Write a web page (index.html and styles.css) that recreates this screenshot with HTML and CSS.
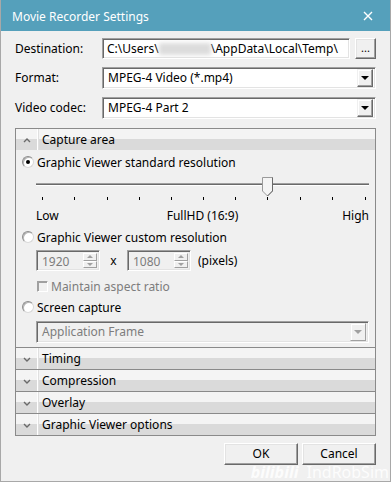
FILE: index.html
```html
<!DOCTYPE html>
<html lang="en">
<head>
    <meta charset="UTF-8">
    <title>Movie Recorder Settings</title>
    <link rel="stylesheet" href="styles.css">
</head>
<body>
<div class="window">
    <div class="titlebar">
        <span class="title">Movie Recorder Settings</span>
        <svg class="close" width="10" height="10" viewBox="0 0 10 10"><path d="M1 1L9 9M9 1L1 9" stroke="#fff" stroke-width="1.4"/></svg>
    </div>

    <div class="content">
        <div class="form">
            <label>Destination:</label>
            <div class="dest">
                <div class="textbox">C:\Users\<span class="blur"></span>\AppData\Local\Temp\</div>
                <div class="btn browse">...</div>
            </div>

            <label>Format:</label>
            <div class="combo">
                <span class="combo-text">MPEG-4 Video (*.mp4)</span>
                <span class="drop"><span class="tri"></span></span>
            </div>

            <label>Video codec:</label>
            <div class="combo">
                <span class="combo-text">MPEG-4 Part 2</span>
                <span class="drop"><span class="tri"></span></span>
            </div>
        </div>

        <div class="panel">
            <div class="section open">
                <div class="sec-head">
                    <span class="chev"><svg width="8" height="6" viewBox="0 0 8 6"><polyline points="1,5 4,2 7,5" fill="none" stroke="#6a6a6a" stroke-width="1.4"/></svg></span>
                    <span class="sec-title">Capture area</span>
                </div>
                <div class="sec-body">
                    <div class="opt"><span class="radio checked"></span>Graphic Viewer standard resolution</div>

                    <div class="slider">
                        <svg width="333" height="30" viewBox="0 0 333 30">
                            <rect x="0" y="11" width="333" height="1" fill="#a0a0a0"/>
                            <rect x="0" y="12" width="333" height="1" fill="#6a6a6a"/>
                            <rect x="0" y="13" width="333" height="1" fill="#fff"/>
                            <g fill="#000">
                                <rect x="6" y="25" width="1" height="3"/>
                                <rect x="38" y="25" width="1" height="3"/>
                                <rect x="71" y="25" width="1" height="3"/>
                                <rect x="103" y="25" width="1" height="3"/>
                                <rect x="135" y="25" width="1" height="3"/>
                                <rect x="167" y="25" width="1" height="3"/>
                                <rect x="199" y="25" width="1" height="3"/>
                                <rect x="231" y="25" width="1" height="3"/>
                                <rect x="264" y="25" width="1" height="3"/>
                                <rect x="296" y="25" width="1" height="3"/>
                                <rect x="329" y="25" width="1" height="3"/>
                            </g>
                            <path d="M226.5 5.5 H236.5 V19 L231.5 24 L226.5 19 Z" fill="#f4f4f4" stroke="#9a9a9a"/>
                            <path d="M236.5 5.5 V19 L231.5 24" fill="none" stroke="#6a6a6a"/>
                        </svg>
                    </div>
                    <div class="scale">
                        <span class="lo">Low</span>
                        <span class="mid">FullHD (16:9)</span>
                        <span class="hi">High</span>
                    </div>

                    <div class="opt gap2"><span class="radio"></span>Graphic Viewer custom resolution</div>

                    <div class="spins">
                        <div class="spin">
                            <span class="spin-val">1920</span>
                            <span class="spin-btns"><span class="sb"><span class="up"></span></span><span class="sb"><span class="dn"></span></span></span>
                        </div>
                        <span class="times">x</span>
                        <div class="spin">
                            <span class="spin-val">1080</span>
                            <span class="spin-btns"><span class="sb"><span class="up"></span></span><span class="sb"><span class="dn"></span></span></span>
                        </div>
                        <span class="unit">(pixels)</span>
                    </div>

                    <div class="check-row"><span class="check"></span>Maintain aspect ratio</div>

                    <div class="opt gap1"><span class="radio"></span>Screen capture</div>

                    <div class="combo disabled">
                        <span class="combo-text">Application Frame</span>
                        <span class="drop"><span class="tri"></span></span>
                    </div>
                </div>
            </div>

            <div class="section">
                <div class="sec-head">
                    <span class="chev"><svg width="8" height="6" viewBox="0 0 8 6"><polyline points="1,2 4,5 7,2" fill="none" stroke="#6a6a6a" stroke-width="1.4"/></svg></span>
                    <span class="sec-title">Timing</span>
                </div>
            </div>
            <div class="section">
                <div class="sec-head">
                    <span class="chev"><svg width="8" height="6" viewBox="0 0 8 6"><polyline points="1,2 4,5 7,2" fill="none" stroke="#6a6a6a" stroke-width="1.4"/></svg></span>
                    <span class="sec-title">Compression</span>
                </div>
            </div>
            <div class="section">
                <div class="sec-head">
                    <span class="chev"><svg width="8" height="6" viewBox="0 0 8 6"><polyline points="1,2 4,5 7,2" fill="none" stroke="#6a6a6a" stroke-width="1.4"/></svg></span>
                    <span class="sec-title">Overlay</span>
                </div>
            </div>
            <div class="section">
                <div class="sec-head">
                    <span class="chev"><svg width="8" height="6" viewBox="0 0 8 6"><polyline points="1,2 4,5 7,2" fill="none" stroke="#6a6a6a" stroke-width="1.4"/></svg></span>
                    <span class="sec-title">Graphic Viewer options</span>
                </div>
            </div>
        </div>

        <div class="actions">
            <div class="btn push">OK</div>
            <div class="btn push">Cancel</div>
        </div>
    </div>

    <!-- watermark -->
    <div class="watermark"><span class="bili">bilibili</span>IndRobSim</div>
</div>
</body>
</html>
```

FILE: styles.css
```css
body {
    margin: 0;
    font-family: "Noto Sans", "Open Sans", sans-serif;
    font-size: 12px;
    color: #000;
    background: #fff;
}

.window {
    position: relative;
    width: 389px;
    height: 481px;
    border: 1px solid #a8a8a8;
    border-top: none;
    background: #f0f0f0;
    overflow: hidden;
}

.titlebar {
    height: 31px;
    background: #55a0bb;
    display: flex;
    align-items: center;
    justify-content: space-between;
    padding: 0 17px 0 11px;
    color: #fff;
}

.title {
    font-size: 12px;
    margin-top: 1px;
}

.content {
    padding: 7px 14px 0 14px;
}

/* top form rows */
.form {
    display: grid;
    grid-template-columns: 87px minmax(0, 1fr);
    row-gap: 8px;
    align-items: center;
}

.form label {
    line-height: 16px;
}

.dest {
    display: flex;
    gap: 5px;
    min-width: 0;
}

.textbox,
.combo,
.spin {
    box-sizing: border-box;
    border: 1px solid;
    border-color: #a0a0a0 #fff #fff #a0a0a0;
    box-shadow: inset 1px 1px #696969, inset -1px -1px #e3e3e3;
    background: #fff;
}

.textbox {
    flex: 1;
    min-width: 0;
    height: 21px;
    line-height: 19px;
    padding-left: 4px;
    white-space: nowrap;
    overflow: hidden;
}

.blur {
    display: inline-block;
    width: 52px;
    height: 12px;
    vertical-align: -2px;
    background: #dcdcdc;
    filter: blur(2px);
}

.btn {
    box-sizing: border-box;
    background: #f0f0f0;
    border: 1px solid;
    border-color: #fff #696969 #696969 #fff;
    box-shadow: inset -1px -1px #a0a0a0, inset 1px 1px #e3e3e3;
    text-align: center;
}

.browse {
    flex: none;
    width: 21px;
    height: 21px;
    line-height: 17px;
    font-size: 11px;
}

.combo {
    height: 22px;
    display: flex;
    align-items: center;
    justify-content: space-between;
    padding: 2px;
}

.combo-text {
    padding-left: 3px;
    line-height: 16px;
}

.drop {
    box-sizing: border-box;
    width: 16px;
    height: 18px;
    background: #f0f0f0;
    border: 1px solid;
    border-color: #f0f0f0 #696969 #696969 #f0f0f0;
    box-shadow: inset -1px -1px #a0a0a0, inset 1px 1px #fff;
    display: flex;
    align-items: center;
    justify-content: center;
}

.tri {
    width: 0;
    height: 0;
    border-left: 4px solid transparent;
    border-right: 4px solid transparent;
    border-top: 4px solid #000;
}

.combo.disabled {
    background: #f0f0f0;
    color: #7d7d7d;
}

.combo.disabled .drop {
    border-color: #f0f0f0 #a0a0a0 #a0a0a0 #f0f0f0;
    box-shadow: inset 1px 1px #fff;
}

.combo.disabled .tri {
    border-top-color: #a0a0a0;
}

/* collapsible panel */
.panel {
    margin-top: 9px;
    border: 1px solid #8a8a8a;
}

.section + .section {
    border-top: 1px solid #8a8a8a;
}

.sec-head {
    height: 21px;
    display: flex;
    align-items: center;
    background: linear-gradient(#f4f4f4 0, #f4f4f4 48%, #dadada 48%, #dadada 100%);
}

.chev {
    width: 22px;
    height: 21px;
    display: flex;
    align-items: center;
    justify-content: center;
    box-sizing: border-box;
    border-right: 1px solid #fff;
    box-shadow: 1px 0 #e0e0e0;
}

.sec-title {
    padding-left: 4px;
}

.sec-body {
    padding: 2px 6px 4px 6px;
    height: 191px;
}

.opt {
    height: 20px;
    display: flex;
    align-items: center;
}

.gap2 {
    margin-top: 2px;
}

.gap1 {
    margin-top: 1px;
}

.radio {
    box-sizing: border-box;
    width: 12px;
    height: 12px;
    border-radius: 50%;
    background: #fff;
    border: 1px solid;
    border-color: #8c8c8c #d8d8d8 #d8d8d8 #8c8c8c;
    box-shadow: inset 1px 1px #b5b5b5;
    margin-right: 3px;
    position: relative;
}

.radio.checked::after {
    content: "";
    position: absolute;
    left: 3px;
    top: 3px;
    width: 4px;
    height: 4px;
    border-radius: 50%;
    background: #000;
}

.slider {
    margin-left: 14px;
    height: 30px;
}

.slider svg {
    display: block;
}

.scale {
    margin: 3px 0 0 14px;
    width: 333px;
    height: 20px;
    display: grid;
    grid-template-columns: 1fr auto 1fr;
    align-items: center;
}

.scale .hi {
    justify-self: end;
}

.spins {
    margin: 3px 0 0 14px;
    display: flex;
    align-items: center;
}

.spin {
    width: 64px;
    height: 21px;
    display: flex;
    justify-content: space-between;
    padding: 2px;
    background: #f0f0f0;
    color: #7d7d7d;
}

.spin-val {
    padding-left: 3px;
    line-height: 17px;
}

.spin-btns {
    width: 14px;
    display: flex;
    flex-direction: column;
}

.sb {
    flex: 1;
    box-sizing: border-box;
    border: 1px solid;
    border-color: #fff #a0a0a0 #a0a0a0 #fff;
    display: flex;
    align-items: center;
    justify-content: center;
}

.up,
.dn {
    width: 0;
    height: 0;
    border-left: 3px solid transparent;
    border-right: 3px solid transparent;
}

.up {
    border-bottom: 3px solid #a0a0a0;
}

.dn {
    border-top: 3px solid #a0a0a0;
}

.times {
    width: 27px;
    text-align: center;
}

.unit {
    margin-left: 7px;
}

.check-row {
    margin: 5px 0 0 15px;
    height: 20px;
    display: flex;
    align-items: center;
    color: #7d7d7d;
}

.check {
    box-sizing: border-box;
    width: 11px;
    height: 11px;
    border: 1px solid;
    border-color: #a0a0a0 #fff #fff #a0a0a0;
    box-shadow: inset 1px 1px #a0a0a0;
    background: #f0f0f0;
    margin-right: 3px;
}

.sec-body .combo {
    margin: 4px 0 0 14px;
}

.actions {
    margin-top: 7px;
    display: flex;
    justify-content: flex-end;
    gap: 4px;
}

.push {
    width: 74px;
    height: 22px;
    line-height: 20px;
}

.watermark {
    position: absolute;
    right: 1px;
    bottom: 0;
    font-size: 16px;
    line-height: 18px;
    color: rgba(255, 255, 255, 0.85);
    white-space: nowrap;
}

.bili {
    font-weight: bold;
    font-style: italic;
    margin-right: 8px;
}
```
